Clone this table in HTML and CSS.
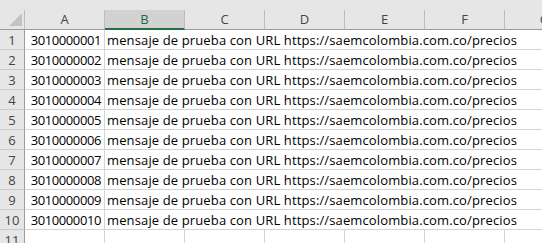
FILE: index.html
```html
<!DOCTYPE html>
<html lang="es">
<head>
    <meta charset="UTF-8">
    <title>Hoja1</title>
    <link rel="stylesheet" href="styles.css">
</head>
<body>
    <div class="sheet">
        <div class="grid" id="grid">
            <div class="corner"><span class="select-all"></span></div>
            <div class="col-head">A</div>
            <div class="col-head active">B</div>
            <div class="col-head">C</div>
            <div class="col-head">D</div>
            <div class="col-head">E</div>
            <div class="col-head">F</div>
            <div class="col-head">G</div>
        </div>
    </div>

    <script>
        const grid = document.getElementById('grid');
        const texto = 'mensaje de prueba con URL https://saemcolombia.com.co/precios';

        for (let i = 1; i <= 10; i++) {
            const numero = '30100000' + String(i).padStart(2, '0');
            grid.insertAdjacentHTML('beforeend',
                '<div class="row-head">' + i + '</div>' +
                '<div class="cell num">' + numero + '</div>' +
                '<div class="cell text">' + texto + '</div>');
        }

        // empty row under the data
        let fila = '<div class="row-head">11</div>';
        for (let c = 0; c < 7; c++) {
            fila += '<div class="cell"></div>';
        }
        grid.insertAdjacentHTML('beforeend', fila);
    </script>
</body>
</html>
```

FILE: styles.css
```css
body { margin: 0; background: #fff; font-family: "Open Sans", "Liberation Sans", Arial, sans-serif; font-size: 13px; }
.sheet { width: 542px; height: 243px; overflow: hidden; background: #fff; }
.grid { display: grid; grid-template-columns: 25px repeat(7, 80px); grid-auto-rows: 20px; width: 585px; padding-top: 10px; background: linear-gradient(#e6e6e6 10px, transparent 10px); }

.corner { background: #e6e6e6; border-right: 1px solid #bdbdbd; border-bottom: 1px solid #9b9b9b; position: relative; }
.select-all { position: absolute; right: 2px; bottom: 3px; width: 0; height: 0; border-left: 13px solid transparent; border-bottom: 13px solid #c3c3c3; }

.col-head { background: #e6e6e6; color: #444; text-align: center; line-height: 19px; border-right: 1px solid #bdbdbd; border-bottom: 1px solid #9b9b9b; }
.col-head.active { background: #d2d2d2; color: #1e6b41; border-bottom: 2px solid #217346; line-height: 18px; }

.row-head { background: #e6e6e6; color: #444; text-align: center; line-height: 19px; padding-top: 1px; border-right: 1px solid #9b9b9b; border-bottom: 1px solid #c9c9c9; }

.cell { border-right: 1px solid #d4d4d4; border-bottom: 1px solid #d4d4d4; line-height: 19px; padding: 1px 2px 0; color: #000; white-space: nowrap; }
.cell.num { text-align: right; padding-right: 3px; letter-spacing: -0.4px; }
.cell.text { grid-column: span 6; border-right: none; letter-spacing: 0.13px; }
```
